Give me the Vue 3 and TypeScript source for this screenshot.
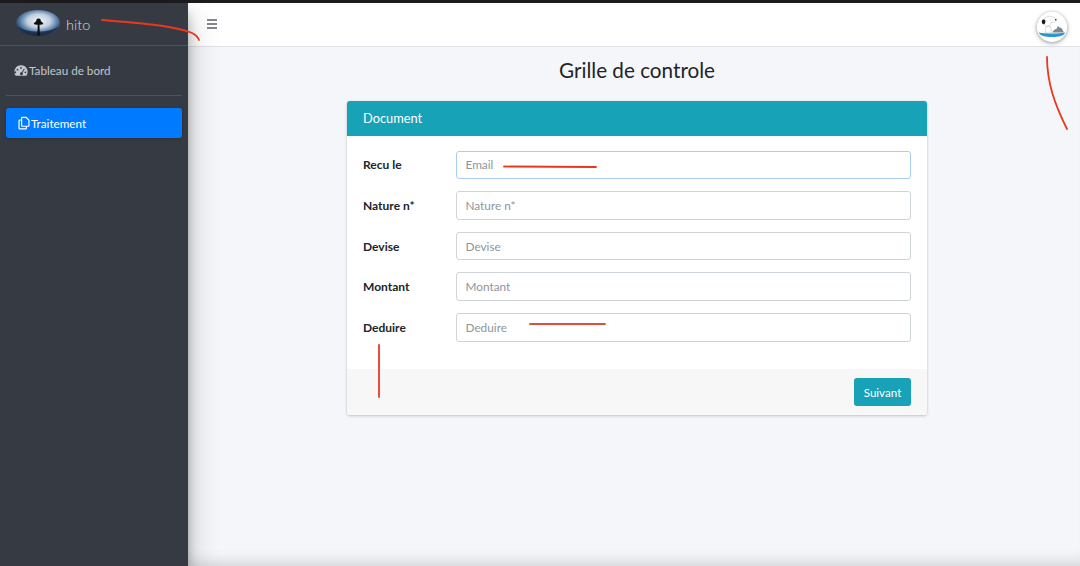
<script setup lang="ts">
const fields = [
  { label: 'Recu le', placeholder: 'Email', focused: true },
  { label: 'Nature n*', placeholder: 'Nature n*', focused: false },
  { label: 'Devise', placeholder: 'Devise', focused: false },
  { label: 'Montant', placeholder: 'Montant', focused: false },
  { label: 'Deduire', placeholder: 'Deduire', focused: false },
]
</script>

<template>
  <div class="page">
    <div class="top-strip"></div>
    <div class="shell">
      <aside class="sidebar">
        <div class="brand">
          <svg class="brand-logo" viewBox="0 0 46 28" width="46" height="28">
            <defs>
              <radialGradient id="sky" cx="52%" cy="42%" r="58%">
                <stop offset="0%" stop-color="#f1f4f7" />
                <stop offset="45%" stop-color="#c3d0de" />
                <stop offset="72%" stop-color="#5c82ab" />
                <stop offset="100%" stop-color="#182842" />
              </radialGradient>
            </defs>
            <ellipse cx="23" cy="13" rx="22" ry="13" fill="url(#sky)" />
            <path d="M2 16.500c5 5 12 9 21 9s17-4 21-9c-5 3-12 5-21 5S7 19.500 2 16.500z" fill="#14233b" opacity=".75" />
            <path d="M23.500 8.500c1.800 0 2.500 1.300 2.300 2.800 1.300.7 2.200 1.500 2.500 2.700-1.200.7-2.500.9-3.800.7l.3 10.800h-2.400l.3-10.800c-1.400.2-2.700 0-3.900-.7.300-1.200 1.200-2 2.500-2.700-.2-1.500.4-2.800 2.200-2.800z" fill="#0c0e12" />
          </svg>
          <span class="brand-name">hito</span>
        </div>
        <nav class="menu">
          <a class="menu-link">
            <svg class="menu-icon" viewBox="0 0 16 14" width="14" height="13">
              <path fill-rule="evenodd" d="M8 1a7.500 7.500 0 0 0-6.500 11.300c.2.400.6.700 1 .7h11c.4 0 .8-.3 1-.7A7.500 7.500 0 0 0 8 1zm0 2a1 1 0 1 1 0 2 1 1 0 0 1 0-2zM4 5a1 1 0 1 1 0 2 1 1 0 0 1 0-2zm-1.500 4a1 1 0 1 1 0-.1zm8.900-4.300.9.500-2.600 4.400a1.600 1.600 0 1 1-.9-.5zM13 8a1 1 0 1 1 0 2 1 1 0 0 1 0-2z" fill="currentColor" />
            </svg>
            Tableau de bord
          </a>
          <div class="menu-divider"></div>
          <a class="menu-link active">
            <svg class="menu-icon" viewBox="0 0 14 16" width="12" height="14">
              <path d="M5 1.500h4.500L12.800 4.800V11a.8.8 0 0 1-.8.800H5a.8.8 0 0 1-.8-.8V2.300A.8.800 0 0 1 5 1.500zM4.200 4.500H2a.8.800 0 0 0-.8.800V14c0 .4.400.8.800.8h7a.8.800 0 0 0 .8-.8v-2.200" fill="none" stroke="currentColor" stroke-width="1.400" />
            </svg>
            Traitement
          </a>
        </nav>
      </aside>

      <div class="main">
        <header class="navbar">
          <button class="burger" aria-label="Menu">
            <span></span><span></span><span></span>
          </button>
          <svg class="avatar" viewBox="0 0 30 30" width="30" height="30">
            <circle cx="15" cy="15" r="15" fill="#fff" />
            <path d="M15 20.500l2.500-3 2-.5 1.500-3 1.500 1.500 2 .5 2.500 4.500z" fill="#7d8893" />
            <path d="M9 14.500c-.5 2-1 4.500-.5 6.500h5.500c.5-2 .3-4.500-.5-6.500z" fill="#fbfbfb" stroke="#a9aeb4" stroke-width=".4" />
            <path d="M6.500 8.500C7 5.500 11 3.500 14.500 4.500c2.500.7 5 2.500 4.700 4.200-.3 1.600-3 1.900-5 1.800-.5 2.500-2.500 4-4.500 4-2.300 0-3.200-3-2.700-6z" fill="#fbfbfb" stroke="#a9aeb4" stroke-width=".4" />
            <path d="M5 8.500c.8-1.500 2.800-1.500 3.300 0 .4 1.400-.4 3.800-1.700 3.800-1.200 0-2.300-2.400-1.600-3.800z" fill="#17181b" />
            <circle cx="18.800" cy="7.700" r=".8" fill="#17181b" />
            <path d="M1.800 20.500c7 1.400 19.400 1.400 26.400 0-1.500 3.600-6 4.500-13.200 4.500S3.300 24 1.800 20.500z" fill="#2b97d0" />
          </svg>
        </header>

        <main class="content">
          <h1 class="title">Grille de controle</h1>
          <section class="card">
            <div class="card-header">Document</div>
            <form class="card-body" @submit.prevent>
              <div v-for="f in fields" :key="f.label" class="row">
                <label class="row-label">{{ f.label }}</label>
                <input class="field" :class="{ focused: f.focused }" type="text" :placeholder="f.placeholder" />
              </div>
            </form>
            <div class="card-footer">
              <button class="next" type="button">Suivant</button>
            </div>
          </section>
        </main>
      </div>
    </div>

    <!-- marker strokes drawn over the screenshot -->
    <svg class="marks" viewBox="0 0 1080 566" width="1080" height="566">
      <g fill="none" stroke="#e8391f" stroke-linecap="round">
        <path d="M102 20c38 3 74 6 90 13 4 2 6 4 7 7" stroke-width="1.800" />
        <path d="M1047 57c0 26 8 48 20 72" stroke-width="1.800" />
        <path d="M504 166.500 596 167" stroke-width="1.800" />
        <path d="M530 324h75" stroke-width="1.800" stroke="#dd4f3c" />
        <path d="M379 345v52" stroke-width="1.800" />
      </g>
    </svg>
  </div>
</template>

<style scoped>
.page {
  position: relative;
  width: 1080px;
  height: 566px;
  overflow: hidden;
  background: #f4f6f9;
  font-family: Lato, "Open Sans", sans-serif;
  color: #212529;
}
.top-strip {
  height: 3px;
  background: #1c1c1e;
}
.shell {
  display: flex;
  height: 563px;
}
.sidebar {
  position: relative;
  z-index: 2;
  flex: 0 0 188px;
  background: #363b43;
  box-shadow: 0 14px 28px rgba(0, 0, 0, 0.25), 0 10px 10px rgba(0, 0, 0, 0.22);
}
.brand {
  display: flex;
  align-items: center;
  gap: 5px;
  height: 42px;
  padding-left: 15px;
  border-bottom: 1px solid #4b545c;
}
.brand-name {
  color: rgba(255, 255, 255, 0.8);
  font-size: 14.500px;
  font-weight: 300;
}
.menu {
  display: flex;
  flex-direction: column;
  padding: 7px 6px 0;
}
.menu-link {
  display: flex;
  align-items: center;
  gap: 1px;
  height: 34px;
  padding-left: 8px;
  border-radius: 3px;
  color: #c2c7d0;
  font-size: 11.700px;
}
.menu-link.active {
  height: 30px;
  padding-left: 12px;
  background: #007bff;
  color: #fff;
  box-shadow: 0 1px 3px rgba(0, 0, 0, 0.2);
}
.menu-divider {
  height: 1px;
  margin: 8px 0 12px;
  background: #4b545c;
}
.main {
  flex: 1;
  display: flex;
  flex-direction: column;
  min-width: 0;
}
.navbar {
  display: flex;
  align-items: center;
  justify-content: space-between;
  flex: 0 0 43px;
  padding: 0 13px 0 19px;
  background: #fff;
  border-bottom: 1px solid #dee2e6;
}
.burger {
  display: flex;
  flex-direction: column;
  gap: 2px;
  width: 10px;
  margin-top: -2px;
  padding: 0;
  border: 0;
  background: none;
}
.burger span {
  height: 2px;
  background: #84888d;
}
.avatar {
  margin-top: 5px;
  border-radius: 50%;
  box-shadow: 0 1px 4px rgba(0, 0, 0, 0.45);
}
.content {
  flex: 1;
  display: flex;
  flex-direction: column;
  align-items: center;
  padding-left: 6px;
  box-shadow: inset 0 -14px 14px -10px rgba(0, 0, 0, 0.14);
}
.title {
  margin: 10px 0 18px;
  font-size: 20.700px;
  line-height: 26px;
  font-weight: 400;
}
.card {
  width: 580px;
  height: 314px;
  display: flex;
  flex-direction: column;
  border-radius: 3px;
  background: #fff;
  box-shadow: 0 0 1px rgba(0, 0, 0, 0.13), 0 1px 3px rgba(0, 0, 0, 0.2);
  overflow: hidden;
}
.card-header {
  display: flex;
  align-items: center;
  flex: 0 0 35px;
  padding: 0 0 1px 16px;
  box-sizing: border-box;
  background: #17a2b8;
  color: #fff;
  font-size: 12.800px;
}
.card-body {
  flex: 1;
  display: flex;
  flex-direction: column;
  gap: 12px;
  padding: 14.600px 16px 0 16px;
}
.row {
  display: flex;
  align-items: center;
  height: 28.600px;
}
.row-label {
  flex: 0 0 93px;
  font-size: 12px;
  font-weight: 700;
}
.field {
  flex: 1;
  height: 100%;
  box-sizing: border-box;
  padding: 0 8.500px;
  border: 1px solid #ced4da;
  border-radius: 3px;
  outline: 0;
  font: inherit;
  font-size: 11.800px;
  color: #495057;
}
.field.focused {
  border-color: #a9cdf0;
}
.field::placeholder {
  color: #8e959c;
  opacity: 1;
}
.card-footer {
  display: flex;
  justify-content: flex-end;
  align-items: center;
  flex: 0 0 46px;
  padding-right: 16px;
  background: #f7f7f7;
}
.next {
  width: 57px;
  height: 28px;
  border: 0;
  border-radius: 3px;
  background: #17a2b8;
  color: #fff;
  font: inherit;
  font-size: 11.600px;
}
.marks {
  position: absolute;
  top: 0;
  left: 0;
  z-index: 3;
  pointer-events: none;
}
</style>
